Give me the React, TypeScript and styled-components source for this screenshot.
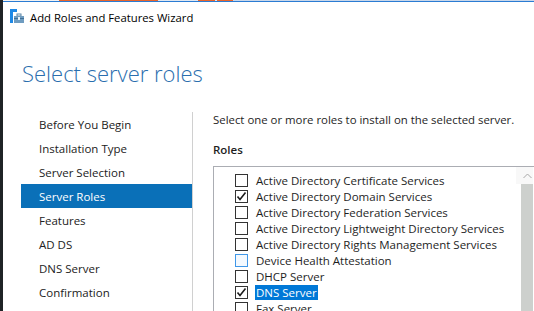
import React from 'react';
import styled, { createGlobalStyle } from 'styled-components';

const GlobalStyle = createGlobalStyle`
  html, body {
    margin: 0;
    padding: 0;
    background: #ffffff;
    overflow: hidden;
  }
  body {
    font-family: 'Open Sans', 'Noto Sans', sans-serif;
  }
`;

type Role = {
  name: string,
  checked?: boolean,
  hover?: boolean,
  selected?: boolean,
};

const steps = [
  'Before You Begin',
  'Installation Type',
  'Server Selection',
  'Server Roles',
  'Features',
  'AD DS',
  'DNS Server',
  'Confirmation'
];

const roles: Role[] = [
  { name: 'Active Directory Certificate Services' },
  { name: 'Active Directory Domain Services', checked: true },
  { name: 'Active Directory Federation Services' },
  { name: 'Active Directory Lightweight Directory Services' },
  { name: 'Active Directory Rights Management Services' },
  { name: 'Device Health Attestation', hover: true },
  { name: 'DHCP Server' },
  { name: 'DNS Server', checked: true, selected: true },
  { name: 'Fax Server' }
];

// bits of whatever sits behind the window, peeking out at the top edge
const backdrop = [
  { w: 56, c: '#f2f2f2' },
  { w: 99, c: '#e8662d' },
  { w: 40, c: '#dfe7f1' },
  { w: 17, c: '#e8662d' },
  { w: 2, c: '#dfe7f1' },
  { w: 16, c: '#e8662d' },
  { w: 304, c: '#c9d7ea' }
];

const Frame = styled.div`
  width: 534px;
  height: 311px;
  display: flex;
  overflow: hidden;
`;

const DarkEdge = styled.div`
  width: 3px;
  flex: none;
  background: #1f2326;
`;

const Window = styled.div`
  flex: 1;
  display: flex;
  flex-direction: column;
  min-width: 0;
`;

const Backdrop = styled.div`
  height: 1px;
  display: flex;
  flex: none;
`;

const BackdropBit = styled.div<{ $w: number, $c: string }>`
  width: ${(p) => p.$w}px;
  flex: none;
  background: ${(p) => p.$c};
`;

const BlueEdge = styled.div`
  height: 1px;
  flex: none;
  background: #2b7cd3;
`;

const TitleBar = styled.div`
  height: 30px;
  display: flex;
  align-items: center;
  gap: 4px;
  padding-left: 7px;
  font-size: 11.3px;
  color: #000000;
  flex: none;
`;

const Heading = styled.h1`
  margin: 0;
  height: 80px;
  padding: 26px 0 0 19px;
  box-sizing: border-box;
  font-weight: 300;
  font-size: 22px;
  line-height: 30px;
  color: #2a6eae;
  flex: none;
`;

const Body = styled.div`
  flex: 1;
  display: flex;
  min-height: 0;
`;

const Nav = styled.div`
  width: 171px;
  margin-left: 18px;
  border-right: 1px solid #d0d0d0;
  flex: none;
`;

const NavItem = styled.div<{ $active?: boolean }>`
  height: 24px;
  padding-left: 18px;
  display: flex;
  align-items: center;
  font-size: 11.5px;
  color: ${(p) => (p.$active ? '#ffffff' : '#222222')};
  background: ${(p) => (p.$active ? '#0a70b8' : 'transparent')};
`;

const Content = styled.div`
  flex: 1;
  padding-left: 20px;
  min-width: 0;
`;

const Intro = styled.div`
  height: 16px;
  line-height: 16px;
  font-size: 11.4px;
  color: #1e1e1e;
  white-space: nowrap;
`;

const SectionLabel = styled.div`
  margin-top: 14px;
  height: 16px;
  line-height: 16px;
  font-size: 11.5px;
  font-weight: 600;
  color: #1e1e1e;
`;

const ListBox = styled.div`
  margin-top: 8px;
  width: 321px;
  height: 200px;
  border: 1px solid #abadb3;
  border-right: none;
  display: flex;
  box-sizing: border-box;
`;

const Rows = styled.div`
  width: 302px;
  padding: 5px 0 0 21px;
  box-sizing: border-box;
  flex: none;
`;

const Row = styled.div`
  height: 16px;
  display: flex;
  align-items: center;
  gap: 8px;
  font-size: 11.5px;
  color: #1e1e1e;
  white-space: nowrap;
`;

const Box = styled.div<{ $hover?: boolean }>`
  width: 13px;
  height: 13px;
  box-sizing: border-box;
  border: 1px solid ${(p) => (p.$hover ? '#3f97e8' : '#333333')};
  background: ${(p) => (p.$hover ? '#f3f9ff' : '#ffffff')};
  display: flex;
  align-items: center;
  justify-content: center;
  flex: none;
`;

const Label = styled.span<{ $selected?: boolean }>`
  line-height: 15px;
  padding: 0 1px;
  margin-left: -1px;
  color: ${(p) => (p.$selected ? '#ffffff' : 'inherit')};
  background: ${(p) => (p.$selected ? '#0078d7' : 'transparent')};
`;

const ScrollBar = styled.div`
  width: 17px;
  display: flex;
  flex-direction: column;
  flex: none;
`;

const ArrowButton = styled.div`
  height: 17px;
  display: flex;
  align-items: center;
  justify-content: flex-end;
  padding-right: 1px;
  background: #f8f8f8;
  flex: none;
`;

const Thumb = styled.div`
  flex: 1;
  margin-left: 5px;
  background: #cdd0cd;
`;

function WizardIcon () {
  return (
    <svg width='16' height='16' viewBox='0 0 16 16'>
      <rect x='0' y='0' width='7' height='3' fill='#1e88e5' />
      <rect x='0' y='3' width='3' height='11' fill='#1e88e5' />
      <rect x='7' y='5' width='4' height='2' fill='none' stroke='#5d87a8' strokeWidth='1' />
      <rect x='4' y='7' width='10' height='7' fill='#6f9cc0' />
      <rect x='4' y='9' width='10' height='1' fill='#3f6f96' />
      <rect x='8' y='8' width='2' height='3' fill='#e9f1f8' />
    </svg>
  );
}

function Check () {
  return (
    <svg width='11' height='11' viewBox='0 0 11 11'>
      <path d='M1.5 5.5 L4 8.5 L9.5 1.5' fill='none' stroke='#1a1a1a' strokeWidth='1.6' />
    </svg>
  );
}

function UpArrow () {
  return (
    <svg width='9' height='6' viewBox='0 0 9 6'>
      <path d='M0.5 5 L4.5 1 L8.5 5' fill='none' stroke='#a8a8a8' strokeWidth='1' />
    </svg>
  );
}

export default function App (): React.ReactElement {
  return (
    <>
      <GlobalStyle />
      <Frame>
        <DarkEdge />
        <Window>
          <Backdrop>
            {backdrop.map((b, i) => (
              <BackdropBit $c={b.c} $w={b.w} key={i} />
            ))}
          </Backdrop>
          <BlueEdge />
          <TitleBar>
            <WizardIcon />
            <span>Add Roles and Features Wizard</span>
          </TitleBar>
          <Heading>Select server roles</Heading>
          <Body>
            <Nav>
              {steps.map((s) => (
                <NavItem $active={s === 'Server Roles'} key={s}>{s}</NavItem>
              ))}
            </Nav>
            <Content>
              <Intro>Select one or more roles to install on the selected server.</Intro>
              <SectionLabel>Roles</SectionLabel>
              <ListBox>
                <Rows>
                  {roles.map((r) => (
                    <Row key={r.name}>
                      <Box $hover={r.hover}>{r.checked && <Check />}</Box>
                      <Label $selected={r.selected}>{r.name}</Label>
                    </Row>
                  ))}
                </Rows>
                <ScrollBar>
                  <ArrowButton><UpArrow /></ArrowButton>
                  <Thumb />
                </ScrollBar>
              </ListBox>
            </Content>
          </Body>
        </Window>
      </Frame>
    </>
  );
}
